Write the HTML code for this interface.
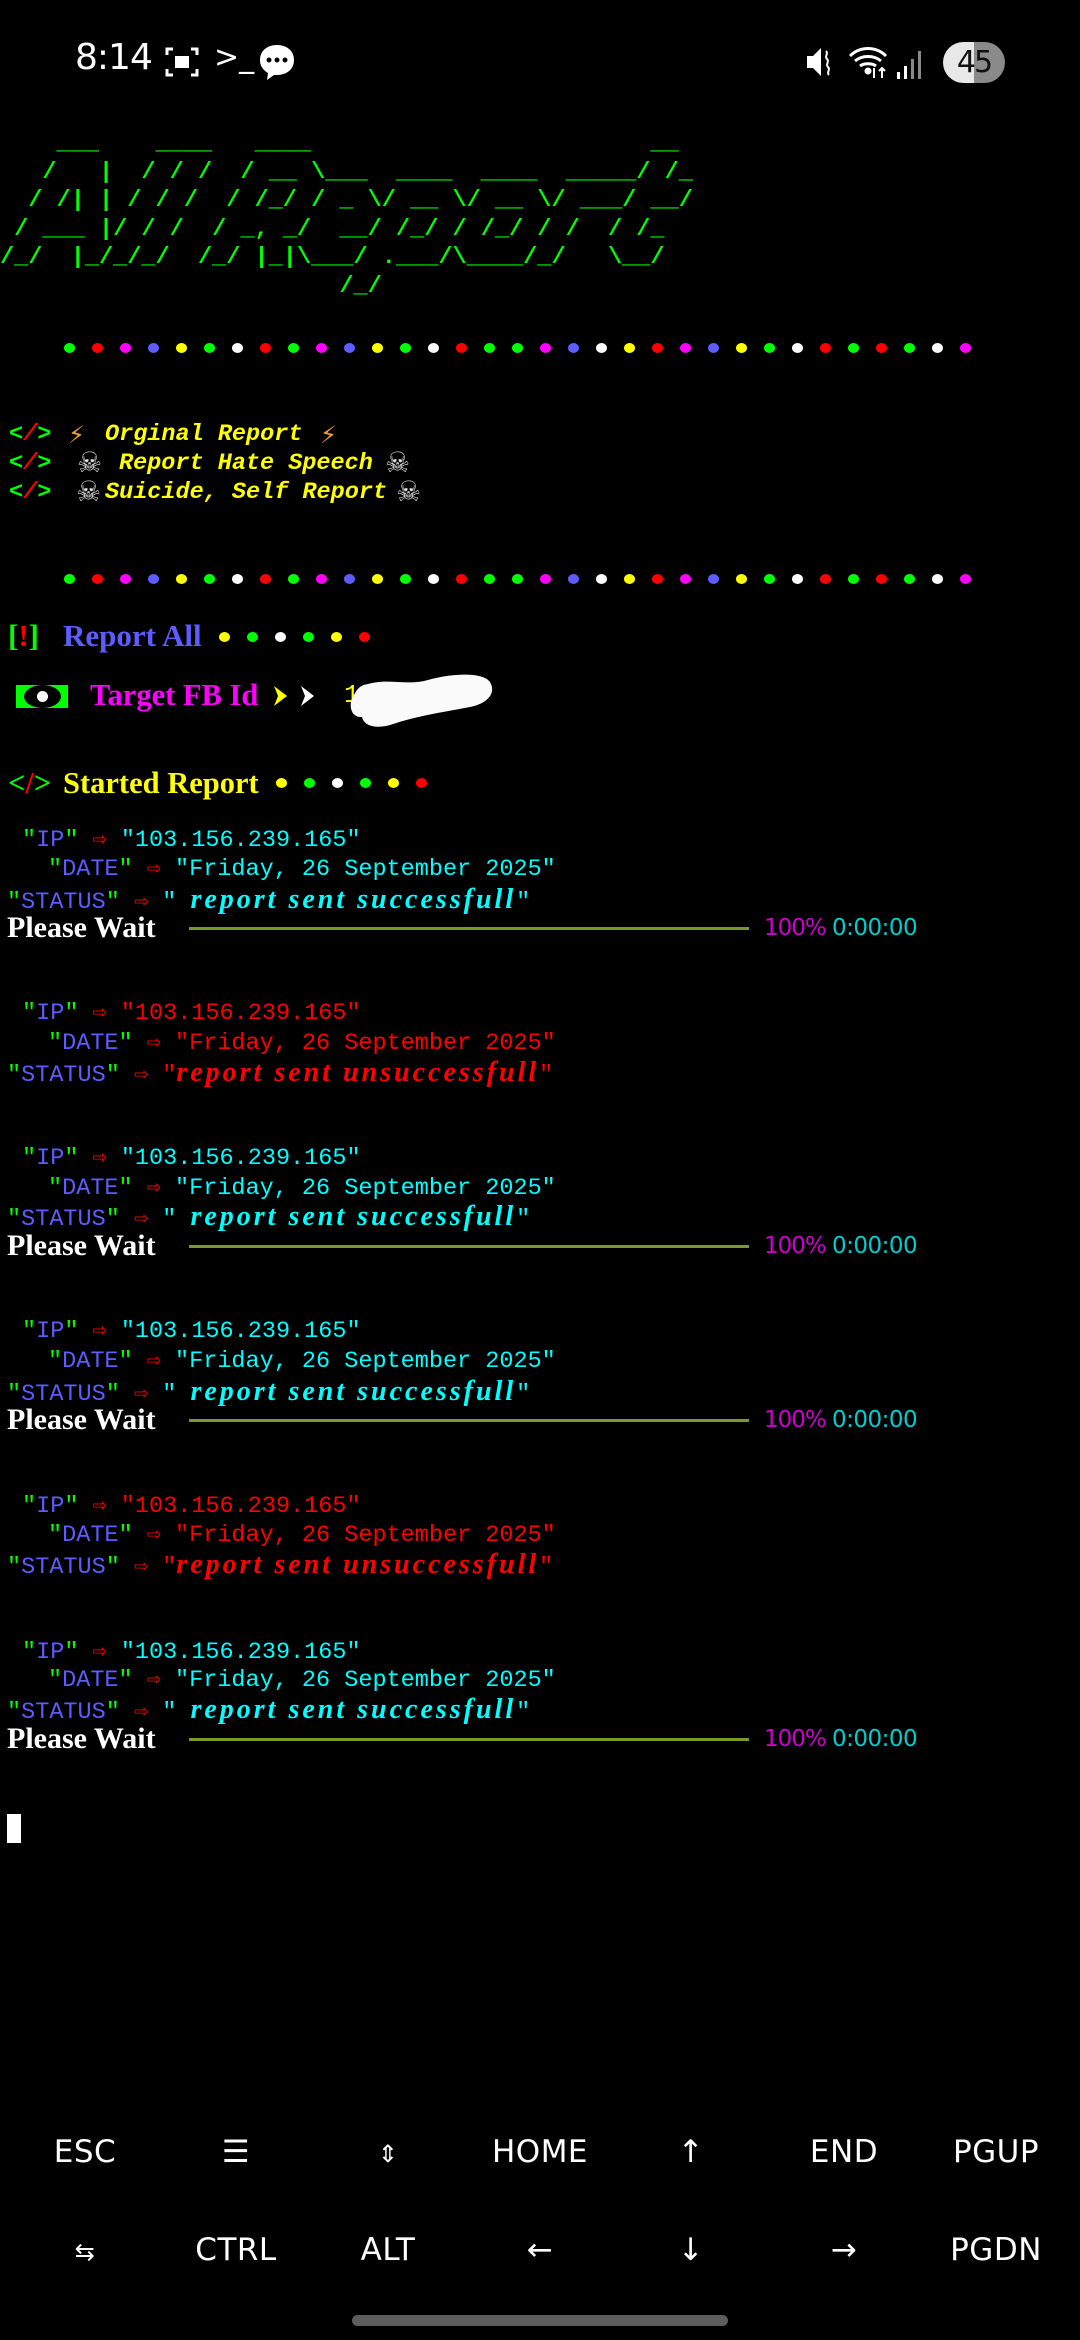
<!DOCTYPE html>
<html><head><meta charset="utf-8"><style>
*{margin:0;padding:0;box-sizing:border-box}
html,body{width:1080px;height:2340px;background:#000;overflow:hidden;position:relative}
.a{position:absolute;white-space:pre}
.m{font-family:"Liberation Mono","DejaVu Sans Mono",monospace}
.s{font-family:"Liberation Serif",serif;font-weight:bold}
.g{color:#00ff00}.r{color:#ff0000}.b{color:#5c5cff}.y{color:#ffff00}.c{color:#00ffff}.w{color:#fff}.mg{color:#ff00ff}
.dots{position:absolute;display:flex}
.dots i{display:block;width:28.03px;height:10px;position:relative}
.dots i:after{content:"";position:absolute;left:8.5px;top:0;width:11px;height:10px;border-radius:50%;background:currentColor}
.k{position:absolute;font-family:"DejaVu Sans",sans-serif;font-size:31px;color:#fff;transform:translateX(-50%);line-height:40px;letter-spacing:0.5px}
.l{position:absolute;font-family:"Liberation Mono",monospace;font-size:23.5px;line-height:30px;white-space:pre}
.st{font-family:"Liberation Serif",serif;font-weight:bold;font-style:italic;font-size:28px;letter-spacing:3px}
.pw{position:absolute;left:7px;font-family:"Liberation Serif",serif;font-weight:bold;font-size:30px;color:#fff;line-height:30px}
.bar{position:absolute;left:189px;width:560px;height:3px;background:#7a9a28}
.pc{position:absolute;left:764px;font-family:"DejaVu Sans",sans-serif;font-size:23px;line-height:30px;color:#cd00cd;letter-spacing:-1px}
.tm{position:absolute;left:832px;font-family:"DejaVu Sans",sans-serif;font-size:23px;line-height:30px;color:#00cdcd;letter-spacing:-0.5px}
.mn{position:absolute;font-family:"Liberation Mono",monospace;font-size:23.5px;line-height:30px;font-weight:bold;font-style:italic;color:#ffff00;white-space:pre}
.em{position:absolute;font-family:"DejaVu Sans",sans-serif;line-height:30px}
</style></head><body>

<div class="a" style="left:75px;top:37px;font-family:'DejaVu Sans',sans-serif;font-size:36px;color:#fff;letter-spacing:-1px">8:14</div>
<svg class="a" style="left:165px;top:46px" width="34" height="32" viewBox="0 0 34 32" fill="none" stroke="#fff" stroke-width="3"><path d="M2 9V3h6M26 3h6v6M32 23v6h-6M8 29H2v-6"/><rect x="10" y="10" width="14" height="12" fill="#fff" stroke="none"/></svg>
<div class="a" style="left:214px;top:40px;font-family:'DejaVu Sans',sans-serif;font-size:30px;color:#fff">&gt;_</div>
<svg class="a" style="left:258px;top:43px" width="38" height="38" viewBox="0 0 38 38"><path d="M19 2C9 2 2 8 2 17c0 6 3 10 8 13l-1 7 7-5c1 0 2 0 3 0 10 0 17-6 17-15S29 2 19 2z" fill="#fff"/><circle cx="11" cy="17" r="2.5"/><circle cx="19" cy="17" r="2.5"/><circle cx="27" cy="17" r="2.5"/></svg>
<svg class="a" style="left:805px;top:45px" width="30" height="34" viewBox="0 0 30 34"><path d="M2 11h6l8-8v28l-8-8H2z" fill="#fff"/><path d="M21 6c3 3-2 5 1 8s-2 5 1 8-2 5 1 8" stroke="#fff" stroke-width="2" fill="none"/></svg>
<svg class="a" style="left:848px;top:44px" width="44" height="36" viewBox="0 0 44 36" fill="none" stroke="#fff" stroke-width="3"><path d="M2 12C12 2 28 2 38 12M7 17c7-6 19-6 26 0M12 22c4-3 12-3 16 0"/><circle cx="20" cy="27" r="2" fill="#fff"/><path d="M26 24v10M34 34v-10M31 27l3-3 3 3" stroke-width="2"/></svg>
<svg class="a" style="left:895px;top:48px" width="30" height="32"><rect x="2" y="24" width="3" height="7" fill="#fff"/><rect x="9" y="18" width="3" height="13" fill="#fff"/><rect x="16" y="11" width="3" height="20" fill="#888"/><rect x="23" y="3" width="3" height="28" fill="#888"/></svg>
<div class="a" style="left:943px;top:42px;width:62px;height:41px;border-radius:21px;background:linear-gradient(90deg,#e8e8e8 50%,#8a8a8a 50%);font-family:'DejaVu Sans',sans-serif;font-size:30px;line-height:41px;text-align:center;color:#111;letter-spacing:-2px">45</div>

<pre class="a m g" style="left:0;top:130px;font-size:23.57px;line-height:28.5px;font-weight:bold">    ___    ____   ____                        __
   /   |  / / /  / __ \___  ____  ____  _____/ /_
  / /| | / / /  / /_/ / _ \/ __ \/ __ \/ ___/ __/
 / ___ |/ / /  / _, _/  __/ /_/ / /_/ / /  / /_
/_/  |_/_/_/  /_/ |_|\___/ .___/\____/_/   \__/
                        /_/</pre>

<div class="dots" style="left:55px;top:343px">
<i class="g"></i><i class="r"></i><i class="mg"></i><i class="b"></i><i class="y"></i><i class="g"></i><i class="w"></i><i class="r"></i><i class="g"></i><i class="mg"></i><i class="b"></i><i class="y"></i><i class="g"></i><i class="w"></i><i class="r"></i><i class="g"></i><i class="g"></i><i class="mg"></i><i class="b"></i><i class="w"></i><i class="y"></i><i class="r"></i><i class="mg"></i><i class="b"></i><i class="y"></i><i class="g"></i><i class="w"></i><i class="r"></i><i class="g"></i><i class="r"></i><i class="g"></i><i class="w"></i><i class="mg"></i></div>

<div class="mn" style="left:9px;top:420px"><span class="g">&lt;</span><span class="r">/</span><span class="g">&gt;</span></div>
<div class="em" style="left:68px;top:420px;font-size:24px;color:#f0a030">⚡</div>
<div class="mn" style="left:105px;top:420px">Orginal Report</div>
<div class="em" style="left:320px;top:420px;font-size:24px;color:#f0a030">⚡</div>

<div class="mn" style="left:9px;top:449px"><span class="g">&lt;</span><span class="r">/</span><span class="g">&gt;</span></div>
<div class="em" style="left:77px;top:448px;font-size:28px;color:#ddd">☠</div>
<div class="mn" style="left:119px;top:449px">Report Hate Speech</div>
<div class="em" style="left:385px;top:448px;font-size:28px;color:#ddd">☠</div>

<div class="mn" style="left:9px;top:478px"><span class="g">&lt;</span><span class="r">/</span><span class="g">&gt;</span></div>
<div class="em" style="left:76px;top:477px;font-size:28px;color:#ddd">☠</div>
<div class="mn" style="left:105px;top:478px">Suicide, Self Report</div>
<div class="em" style="left:396px;top:477px;font-size:28px;color:#ddd">☠</div>

<div class="dots" style="left:55px;top:574px">
<i class="g"></i><i class="r"></i><i class="mg"></i><i class="b"></i><i class="y"></i><i class="g"></i><i class="w"></i><i class="r"></i><i class="g"></i><i class="mg"></i><i class="b"></i><i class="y"></i><i class="g"></i><i class="w"></i><i class="r"></i><i class="g"></i><i class="g"></i><i class="mg"></i><i class="b"></i><i class="w"></i><i class="y"></i><i class="r"></i><i class="mg"></i><i class="b"></i><i class="y"></i><i class="g"></i><i class="w"></i><i class="r"></i><i class="g"></i><i class="r"></i><i class="g"></i><i class="w"></i><i class="mg"></i></div>

<div class="a s" style="left:8px;top:618px;font-size:31px;line-height:36px"><span class="g">[</span><span class="r">!</span><span class="g">]</span></div>
<div class="a s b" style="left:63px;top:618px;font-size:31px;line-height:36px">Report All</div>
<div class="dots" style="left:210px;top:632px"><i class="y"></i><i class="g"></i><i class="w"></i><i class="g"></i><i class="y"></i><i class="r"></i></div>

<div class="a" style="left:16px;top:685px;width:52px;height:23px;background:#00ff00"></div>
<div class="a" style="left:24px;top:685px;width:37px;height:23px;background:#000;border-radius:50%"></div>
<div class="a" style="left:37px;top:691px;width:11px;height:11px;background:#fff;border-radius:50%"></div>
<div class="a s mg" style="left:90px;top:677px;font-size:30.5px;line-height:36px">Target FB Id</div>
<svg class="a" style="left:272px;top:684px" width="48" height="24"><path d="M2 2l13 10-13 10 4-10z" fill="#ffff00"/><path d="M29 2l13 10-13 10 4-10z" fill="#fff"/></svg>
<div class="a y" style="left:344px;top:680px;font-family:'Liberation Mono',monospace;font-size:26px">1</div>
<svg class="a" style="left:350px;top:670px" width="145" height="60"><path d="M18 14c20-6 40 2 60-4 25-7 55-8 62 2 7 12-4 22-20 25-25 5-50 8-80 18-14 4-26 1-28-8-12 1-14-14-8-22 4-8 8-10 14-11z" fill="#fafafa"/></svg>

<div class="a s" style="left:8px;top:765px;font-size:30.5px;line-height:36px"><span class="g">&lt;</span><span class="r">/</span><span class="g">&gt;</span></div>
<div class="a s y" style="left:63px;top:765px;font-size:30.5px;line-height:36px">Started Report</div>
<div class="dots" style="left:267px;top:778px"><i class="y"></i><i class="g"></i><i class="w"></i><i class="g"></i><i class="y"></i><i class="r"></i></div>

<!-- block 1 -->
<div class="l" style="left:22px;top:826px"><span class="g">"</span><span class="b">IP</span><span class="g">"</span> <span class="r">⇨</span> <span class="c">"103.156.239.165"</span></div>
<div class="l" style="left:48px;top:855px"><span class="g">"</span><span class="b">DATE</span><span class="g">"</span> <span class="r">⇨</span> <span class="c">"Friday, 26 September 2025"</span></div>
<div class="l" style="left:7px;top:885px"><span class="g">"</span><span class="b">STATUS</span><span class="g">"</span> <span class="r">⇨</span> <span class="c">" <span class="st">report sent successfull</span>"</span></div>
<div class="pw" style="top:913px">Please Wait</div><div class="bar" style="top:927px"></div><div class="pc" style="top:913px">100%</div><div class="tm" style="top:913px">0:00:00</div>

<!-- block 2 -->
<div class="l" style="left:22px;top:999px"><span class="g">"</span><span class="b">IP</span><span class="g">"</span> <span class="r">⇨</span> <span class="r">"103.156.239.165"</span></div>
<div class="l" style="left:48px;top:1029px"><span class="g">"</span><span class="b">DATE</span><span class="g">"</span> <span class="r">⇨</span> <span class="r">"Friday, 26 September 2025"</span></div>
<div class="l" style="left:7px;top:1058px"><span class="g">"</span><span class="b">STATUS</span><span class="g">"</span> <span class="r">⇨</span> <span class="r">"<span class="st">report sent unsuccessfull</span>"</span></div>

<!-- block 3 -->
<div class="l" style="left:22px;top:1144px"><span class="g">"</span><span class="b">IP</span><span class="g">"</span> <span class="r">⇨</span> <span class="c">"103.156.239.165"</span></div>
<div class="l" style="left:48px;top:1174px"><span class="g">"</span><span class="b">DATE</span><span class="g">"</span> <span class="r">⇨</span> <span class="c">"Friday, 26 September 2025"</span></div>
<div class="l" style="left:7px;top:1202px"><span class="g">"</span><span class="b">STATUS</span><span class="g">"</span> <span class="r">⇨</span> <span class="c">" <span class="st">report sent successfull</span>"</span></div>
<div class="pw" style="top:1231px">Please Wait</div><div class="bar" style="top:1245px"></div><div class="pc" style="top:1231px">100%</div><div class="tm" style="top:1231px">0:00:00</div>

<!-- block 4 -->
<div class="l" style="left:22px;top:1317px"><span class="g">"</span><span class="b">IP</span><span class="g">"</span> <span class="r">⇨</span> <span class="c">"103.156.239.165"</span></div>
<div class="l" style="left:48px;top:1347px"><span class="g">"</span><span class="b">DATE</span><span class="g">"</span> <span class="r">⇨</span> <span class="c">"Friday, 26 September 2025"</span></div>
<div class="l" style="left:7px;top:1377px"><span class="g">"</span><span class="b">STATUS</span><span class="g">"</span> <span class="r">⇨</span> <span class="c">" <span class="st">report sent successfull</span>"</span></div>
<div class="pw" style="top:1405px">Please Wait</div><div class="bar" style="top:1419px"></div><div class="pc" style="top:1405px">100%</div><div class="tm" style="top:1405px">0:00:00</div>

<!-- block 5 -->
<div class="l" style="left:22px;top:1492px"><span class="g">"</span><span class="b">IP</span><span class="g">"</span> <span class="r">⇨</span> <span class="r">"103.156.239.165"</span></div>
<div class="l" style="left:48px;top:1521px"><span class="g">"</span><span class="b">DATE</span><span class="g">"</span> <span class="r">⇨</span> <span class="r">"Friday, 26 September 2025"</span></div>
<div class="l" style="left:7px;top:1550px"><span class="g">"</span><span class="b">STATUS</span><span class="g">"</span> <span class="r">⇨</span> <span class="r">"<span class="st">report sent unsuccessfull</span>"</span></div>

<!-- block 6 -->
<div class="l" style="left:22px;top:1638px"><span class="g">"</span><span class="b">IP</span><span class="g">"</span> <span class="r">⇨</span> <span class="c">"103.156.239.165"</span></div>
<div class="l" style="left:48px;top:1666px"><span class="g">"</span><span class="b">DATE</span><span class="g">"</span> <span class="r">⇨</span> <span class="c">"Friday, 26 September 2025"</span></div>
<div class="l" style="left:7px;top:1695px"><span class="g">"</span><span class="b">STATUS</span><span class="g">"</span> <span class="r">⇨</span> <span class="c">" <span class="st">report sent successfull</span>"</span></div>
<div class="pw" style="top:1724px">Please Wait</div><div class="bar" style="top:1738px"></div><div class="pc" style="top:1724px">100%</div><div class="tm" style="top:1724px">0:00:00</div>

<div class="a" style="left:7px;top:1814px;width:14px;height:29px;background:#fff"></div>

<div class="k" style="left:85px;top:2132px">ESC</div>
<div class="k" style="left:236px;top:2132px">☰</div>
<div class="k" style="left:388px;top:2134px;font-size:24px">⇕</div>
<div class="k" style="left:540px;top:2132px">HOME</div>
<div class="k" style="left:691px;top:2132px">↑</div>
<div class="k" style="left:844px;top:2132px">END</div>
<div class="k" style="left:996px;top:2132px">PGUP</div>
<div class="k" style="left:85px;top:2232px;font-size:24px">⇆</div>
<div class="k" style="left:236px;top:2230px">CTRL</div>
<div class="k" style="left:388px;top:2230px">ALT</div>
<div class="k" style="left:540px;top:2230px">←</div>
<div class="k" style="left:691px;top:2230px">↓</div>
<div class="k" style="left:844px;top:2230px">→</div>
<div class="k" style="left:996px;top:2230px">PGDN</div>

<div class="a" style="left:352px;top:2315px;width:376px;height:11px;border-radius:6px;background:#5d5d5d"></div>
</body></html>
